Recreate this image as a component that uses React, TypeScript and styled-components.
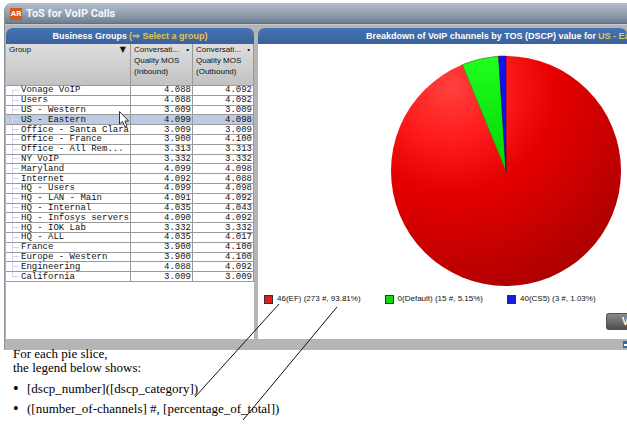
import React from 'react';
import styled, { createGlobalStyle } from 'styled-components';

const GlobalStyle = createGlobalStyle`
  * { box-sizing: border-box; }
  body {
    margin: 0;
    background: #fff;
    color: #111;
    font-family: "Liberation Sans", Arial, sans-serif;
    overflow: hidden;
  }
`;

const Page = styled.div`
  position: relative;
  min-height: 100vh;
  padding: 3px 0 0 4px;
`;

const Window = styled.main`
  background: #b5b5b5;
  border-left: 1px solid #8a8f96;
  border-top-left-radius: 8px;
  overflow: hidden;
`;

const TitleBar = styled.header`
  display: flex;
  align-items: center;
  gap: 4px;
  height: 21px;
  padding: 1px 0 0 5px;
  background: linear-gradient(#b3bfce, #95a2b3 50%, #6d7e93);
  border-bottom: 1px solid #626f80;
`;

const Logo = styled.span`
  width: 12px;
  height: 12px;
  background: #d9571c;
  color: #fff;
  font: bold 8px/12px Roboto, sans-serif;
  text-align: center;
`;

const AppTitle = styled.h1`
  margin: 0;
  color: #f4f6f9;
  font-family: Roboto, sans-serif;
  font-size: 11px;
  line-height: 16px;
  white-space: nowrap;
`;

const Panels = styled.div`
  display: grid;
  grid-template-columns: 248px minmax(0, 1fr);
  column-gap: 4px;
  padding: 3px 0 0 1px;
  border-top: 1px solid #c9c9c9;
  min-height: 315px;
`;

const Panel = styled.section`
  display: flex;
  flex-direction: column;
  min-width: 0;
  background: #fff;
  border-radius: 6px 6px 0 0;
  overflow: hidden;
`;

const PanelTitle = styled.h2<{ $start?: boolean }>`
  display: flex;
  justify-content: ${(p) => (p.$start ? 'flex-start' : 'center')};
  gap: 2px;
  flex: none;
  margin: 0;
  height: 16px;
  padding-left: ${(p) => (p.$start ? '108px' : '0')};
  background: linear-gradient(#4674b1, #38629c);
  color: #fff;
  font-size: 9px;
  line-height: 17px;
  white-space: nowrap;
`;

const GroupLink = styled.a`
  color: #e8c24e;
  text-decoration: none;
`;

const GroupTable = styled.table`
  width: 100%;
  height: 238px;
  table-layout: fixed;
  border-collapse: separate;
  border-spacing: 0;
`;

const HeadCell = styled.th<{ $width?: string }>`
  width: ${(p) => p.$width ?? 'auto'};
  height: 42px;
  padding: 0 3px;
  vertical-align: top;
  text-align: left;
  font-weight: normal;
  font-size: 8px;
  line-height: 11px;
  white-space: nowrap;
  background: linear-gradient(#dedede, #c2c2c2);
  border-right: 1px solid #999;
  border-bottom: 1px solid #999;
`;

const HeadLabel = styled.span`
  display: flex;
  justify-content: space-between;
`;

const SortButton = styled.button`
  border: 0;
  padding: 0 1px;
  background: none;
  color: inherit;
  font: 8px/11px "DejaVu Sans", sans-serif;
`;

const Row = styled.tr<{ $selected?: boolean }>`
  background: ${(p) => (p.$selected ? '#bccbe1' : '#fff')};
`;

const Cell = styled.td`
  padding: 0 1px;
  border-right: 1px solid #999;
  border-bottom: 1px solid #999;
  font: 9px/8px "Liberation Mono", monospace;
  text-align: right;
  white-space: nowrap;
`;

const NameCell = styled(Cell)<{ $edge?: 'first' | 'last' }>`
  padding-left: 15px;
  text-align: left;
  background-image: linear-gradient(#d5d5f3, #d5d5f3), linear-gradient(#d5d5f3, #d5d5f3);
  background-repeat: no-repeat;
  background-size: 7px 1px, 1px ${(p) => (p.$edge ? '50%' : '100%')};
  background-position: 6px 50%, 6px ${(p) => (p.$edge === 'first' ? '100%' : '0')};
`;

const ChartBody = styled.div`
  flex: 1;
  display: flex;
  flex-direction: column;
`;

const Pie = styled.svg`
  display: block;
  width: 232px;
  height: 232px;
  margin: 11px 0 0 132px;
`;

const Legend = styled.ul`
  display: flex;
  gap: 24px;
  margin: 6px 0 0;
  padding: 0 0 0 6px;
  list-style: none;
  font-size: 8px;
  line-height: 12px;
  white-space: nowrap;
`;

const LegendItem = styled.li`
  display: flex;
  align-items: center;
  gap: 4px;
`;

const Swatch = styled.span<{ $color: string }>`
  width: 9px;
  height: 9px;
  border: 1px solid #333;
  background: ${(p) => p.$color};
`;

const ViewButton = styled.button`
  align-self: flex-end;
  width: 21px;
  height: 17px;
  margin-top: 8px;
  padding: 0 0 0 15px;
  border: 1px solid #555;
  border-right: 0;
  border-radius: 3px 0 0 3px;
  background: linear-gradient(#8b8b8b, #4e4e4e);
  color: #fff;
  font: bold 10px/15px "Liberation Sans", sans-serif;
  text-align: left;
  overflow: hidden;
`;

const StatusBar = styled.footer`
  display: flex;
  justify-content: flex-end;
  align-items: center;
  height: 11px;
`;

const Notes = styled.section`
  padding-left: 9px;
  color: #000;
  font: 13px/14px "Liberation Serif", serif;
`;

const Intro = styled.p`
  margin: -3px 0 0;
`;

const NoteList = styled.ul`
  margin: 4px 0 0;
  padding: 0;
  line-height: 20px;
  list-style: none;
`;

const Note = styled.li`
  display: flex;

  &::before {
    content: "•";
    flex: none;
    width: 14px;
    font-size: 16px;
  }
`;

const Overlay = styled.svg`
  position: absolute;
  left: 0;
  top: 0;
  pointer-events: none;
`;

const groups: [string, string, string][] = [
  ['Vonage VoIP', '4.088', '4.092'],
  ['Users', '4.088', '4.092'],
  ['US - Western', '3.009', '3.009'],
  ['US - Eastern', '4.099', '4.098'],
  ['Office - Santa Clara', '3.009', '3.009'],
  ['Office - France', '3.900', '4.100'],
  ['Office - All Rem...', '3.313', '3.313'],
  ['NY VoIP', '3.332', '3.332'],
  ['Maryland', '4.099', '4.098'],
  ['Internet', '4.092', '4.088'],
  ['HQ - Users', '4.099', '4.098'],
  ['HQ - LAN - Main', '4.091', '4.092'],
  ['HQ - Internal', '4.035', '4.043'],
  ['HQ - Infosys servers', '4.090', '4.092'],
  ['HQ - IOK Lab', '3.332', '3.332'],
  ['HQ - ALL', '4.035', '4.017'],
  ['France', '3.900', '4.100'],
  ['Europe - Western', '3.900', '4.100'],
  ['Engineering', '4.088', '4.092'],
  ['California', '3.009', '3.009'],
];

const legend = [
  { color: '#e01b1b', label: '46(EF) (273 #, 93.81%)' },
  { color: '#12d812', label: '0(Default) (15 #, 5.15%)' },
  { color: '#1a1ae0', label: '40(CS5) (3 #, 1.03%)' },
];

const edgeOf = (i: number) => (i === 0 ? 'first' : i === groups.length - 1 ? 'last' : undefined);

export default function App() {
  return (
    <Page>
      <GlobalStyle />
      <Window>
        <TitleBar>
          <Logo>AR</Logo>
          <AppTitle>ToS for VoIP Calls</AppTitle>
        </TitleBar>
        <Panels>
          <Panel>
            <PanelTitle>
              Business Groups <GroupLink href="#groups">(⇒ Select a group)</GroupLink>
            </PanelTitle>
            <GroupTable>
              <thead>
                <tr>
                  <HeadCell scope="col">
                    <HeadLabel>Group <SortButton aria-label="Sort by group">▼</SortButton></HeadLabel>
                  </HeadCell>
                  <HeadCell scope="col" $width="62px">
                    <HeadLabel>Conversati... <span>•</span></HeadLabel>Quality MOS<br />(Inbound)
                  </HeadCell>
                  <HeadCell scope="col" $width="61px">
                    <HeadLabel>Conversati... <span>•</span></HeadLabel>Quality MOS<br />(Outbound)
                  </HeadCell>
                </tr>
              </thead>
              <tbody>
                {groups.map(([name, inbound, outbound], i) => (
                  <Row key={name} $selected={name === 'US - Eastern'}>
                    <NameCell $edge={edgeOf(i)}>{name}</NameCell>
                    <Cell>{inbound}</Cell>
                    <Cell>{outbound}</Cell>
                  </Row>
                ))}
              </tbody>
            </GroupTable>
          </Panel>
          <Panel>
            <PanelTitle $start>
              Breakdown of VoIP channels by TOS (DSCP) value for <GroupLink href="#us-eastern">US - Eastern</GroupLink>
            </PanelTitle>
            <ChartBody>
              <Pie viewBox="-116 -116 232 232" role="img" aria-label="Channels by DSCP value">
                <defs>
                  <radialGradient id="red" gradientUnits="userSpaceOnUse" cx="-56" cy="-84" r="260">
                    <stop offset="0" stopColor="#ff4040" />
                    <stop offset="0.2" stopColor="#ff1c1c" />
                    <stop offset="0.4" stopColor="#e60000" />
                    <stop offset="1" stopColor="#960000" />
                  </radialGradient>
                  <linearGradient id="green" x1="0" y1="0" x2="0" y2="1">
                    <stop offset="0" stopColor="#20ff20" />
                    <stop offset="1" stopColor="#00d400" />
                  </linearGradient>
                </defs>
                <circle r="115" fill="url(#red)" />
                <path d="M0 0L-43.6 -106.4A115 115 0 0 1 -7.4 -114.8Z" fill="url(#green)" stroke="#3a8a20" strokeWidth="0.6" />
                <path d="M0 0L-7.4 -114.8A115 115 0 0 1 0 -115Z" fill="#1212f0" stroke="#101070" strokeWidth="0.6" />
              </Pie>
              <Legend>
                {legend.map((item) => (
                  <LegendItem key={item.label}><Swatch $color={item.color} />{item.label}</LegendItem>
                ))}
              </Legend>
              <ViewButton>V</ViewButton>
            </ChartBody>
          </Panel>
        </Panels>
        <StatusBar>
          <svg width="4" height="7" aria-hidden="true">
            <path d="M0 0H4V7H0Z" fill="#2f6da8" />
            <path d="M1 3H4V5H1Z" fill="#fff" />
          </svg>
        </StatusBar>
      </Window>
      <Notes>
        <Intro>For each pie slice,<br />the legend below shows:</Intro>
        <NoteList>
          <Note>[dscp_number]([dscp_category])</Note>
          <Note>([number_of-channels] #, [percentage_of_total])</Note>
        </NoteList>
      </Notes>
      <Overlay width="627" height="442" aria-hidden="true">
        <path d="M279 304L195 397M337 307L243 420" stroke="#111" fill="none" />
        <path d="M119.500 111.500V124L122.500 121.500L125 127L127 126L125 121H128.500Z" fill="#fff" stroke="#333" />
      </Overlay>
    </Page>
  );
}
